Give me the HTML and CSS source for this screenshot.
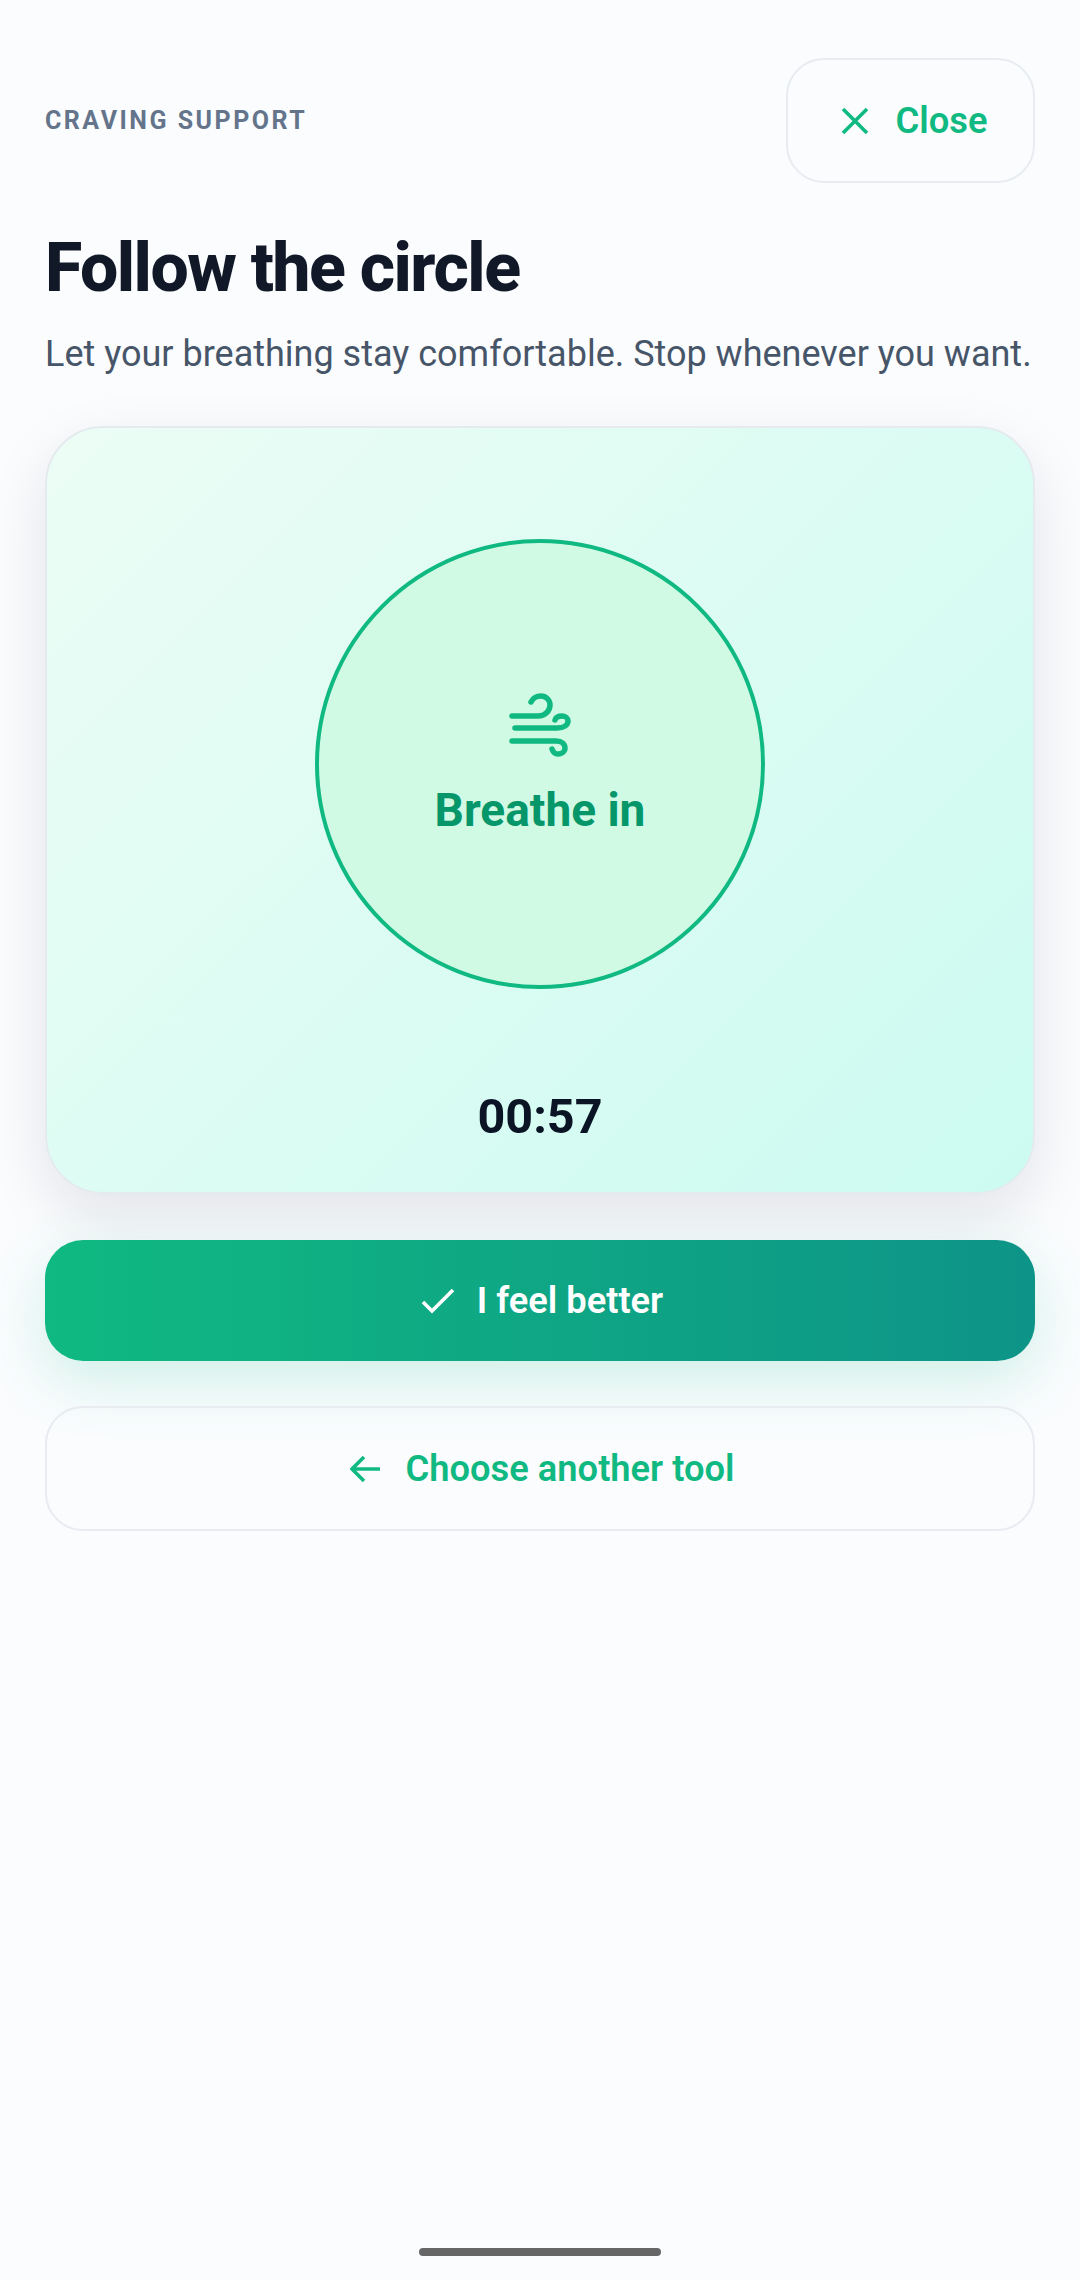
FILE: index.html
```html
<!DOCTYPE html>
<html lang="en">
<head>
  <meta charset="UTF-8">
  <meta name="viewport" content="width=device-width, initial-scale=1.0">
  <title>Follow the circle</title>
  <link rel="stylesheet" href="styles.css">
</head>
<body>
  <div class="screen">
    <div class="topbar">
      <span class="eyebrow">CRAVING SUPPORT</span>
      <div class="close-btn">
        <svg class="icon-close" viewBox="0 0 28 28"><path d="M2 2 L26 26 M26 2 L2 26"/></svg>
        <span>Close</span>
      </div>
    </div>

    <h1>Follow the circle</h1>
    <p class="subtitle">Let your breathing stay comfortable. Stop whenever you want.</p>

    <div class="card">
      <div class="circle">
        <svg class="icon-wind" viewBox="0 0 62 64"><path d="M3 23 H29 C36 23 41 18 41 12 C41 7 37 3 32 3 C27 3 24 5 22 9"/><path d="M6 35 H48 C55 35 59 32 59 28 C59 25 56 23 53 23 C50 23 47 24 46 27"/><path d="M3 48 H47 C53 48 56 51 56 55 C56 59 52 61 49 61 C46 61 44 59 43 56"/></svg>
        <div class="phase">Breathe in</div>
      </div>
      <div class="timer">00:57</div>
    </div>

    <div class="btn btn-primary">
      <svg class="icon-check" viewBox="0 0 34 26"><path d="M2 14 L11 23 L32 2"/></svg>
      <span>I feel better</span>
    </div>
    <div class="btn btn-secondary">
      <svg class="icon-back" viewBox="0 0 32 28"><path d="M30 14 H3 M14 2 L2 14 L14 26"/></svg>
      <span>Choose another tool</span>
    </div>

    <div class="home-bar"></div>
  </div>
</body>
</html>
```

FILE: styles.css
```css
html, body {
  margin: 0;
  padding: 0;
  background: #fafcfe;
  font-family: Roboto, sans-serif;
}
.screen {
  width: 1080px;
  height: 2280px;
  box-sizing: border-box;
  padding: 58px 45px 24px;
  display: flex;
  flex-direction: column;
}
.topbar {
  display: flex;
  justify-content: space-between;
  align-items: center;
}
.eyebrow {
  font-size: 25px;
  font-weight: 700;
  letter-spacing: 2.5px;
  color: #64748b;
}
.close-btn {
  width: 249px;
  height: 125px;
  box-sizing: border-box;
  padding-left: 7px;
  border: 2.5px solid #e8ebf0;
  border-radius: 38px;
  display: flex;
  align-items: center;
  justify-content: center;
  gap: 27px;
  font-size: 36.3px;
  font-weight: 600;
  color: #10b981;
}
.icon-close {
  width: 28px;
  height: 28px;
  fill: none;
  stroke: #10b981;
  stroke-width: 3.6;
}
h1 {
  margin: 46px 0 0;
  font-size: 68px;
  line-height: 78px;
  font-weight: 800;
  letter-spacing: -1.55px;
  color: #111827;
}
.subtitle {
  margin: 22px 0 0;
  font-size: 36px;
  line-height: 50px;
  color: #475569;
}
.card {
  margin-top: 47px;
  height: 768px;
  box-sizing: border-box;
  border: 2.5px solid #e5eaee;
  border-radius: 58px;
  background: linear-gradient(135deg, #ecfdf5 0%, #ccfbf1 100%);
  box-shadow: 0 22px 60px rgba(15, 23, 42, 0.1);
  display: flex;
  flex-direction: column;
  align-items: center;
  padding-top: 111px;
}
.circle {
  width: 450px;
  height: 450px;
  box-sizing: border-box;
  padding-top: 4px;
  border: 4px solid #10b981;
  border-radius: 50%;
  background: #d1fae5;
  display: flex;
  flex-direction: column;
  align-items: center;
  justify-content: center;
}
.icon-wind {
  width: 62px;
  height: 64px;
  fill: none;
  stroke: #10b981;
  stroke-width: 5.5;
  stroke-linecap: round;
}
.phase {
  margin-top: 23px;
  font-size: 46px;
  line-height: 60px;
  font-weight: 700;
  color: #059669;
}
.timer {
  margin-top: 98px;
  font-size: 48.5px;
  line-height: 60px;
  font-weight: 700;
  color: #0b1424;
}
.btn {
  display: flex;
  align-items: center;
  justify-content: center;
  box-sizing: border-box;
  padding-left: 4px;
  font-size: 36.3px;
  font-weight: 600;
}
.btn-primary {
  margin-top: 46px;
  height: 121px;
  gap: 22px;
  border-radius: 38px;
  background: linear-gradient(90deg, #10b981 0%, #0d9488 100%);
  box-shadow: 0 20px 60px rgba(16, 185, 129, 0.18);
  color: #fff;
}
.btn-secondary {
  margin-top: 45px;
  height: 125px;
  gap: 24px;
  border: 2.5px solid #e8ebf0;
  border-radius: 38px;
  color: #10b981;
}
.icon-check {
  width: 34px;
  height: 26px;
  fill: none;
  stroke: #fff;
  stroke-width: 3.6;
}
.icon-back {
  width: 32px;
  height: 28px;
  fill: none;
  stroke: #10b981;
  stroke-width: 3.6;
}
.home-bar {
  width: 242px;
  height: 8px;
  margin: auto auto 0;
  border-radius: 4px;
  background: #666;
}
```
